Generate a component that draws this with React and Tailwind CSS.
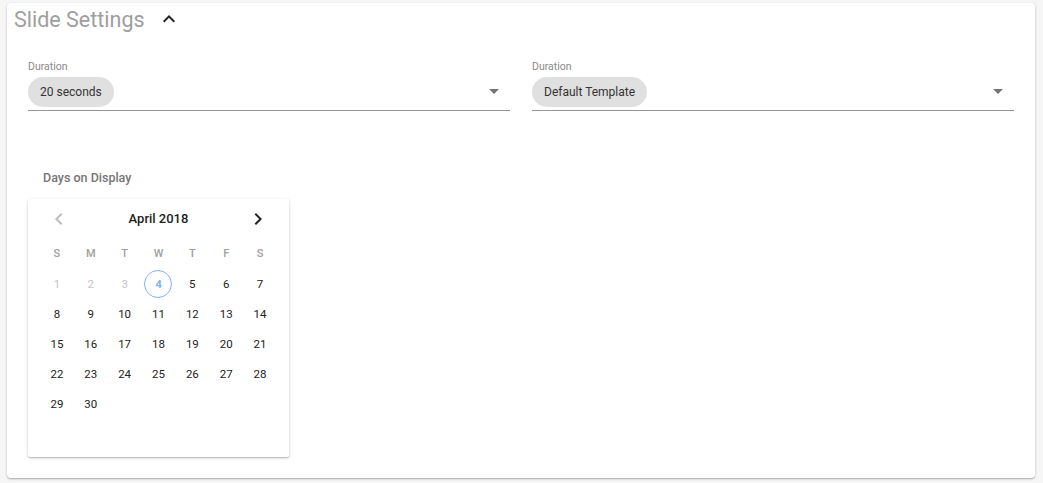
import React from "react";

function Field({ label, value }) {
  return (
    <div className="flex-1 flex flex-col">
      <div className="text-[10.5px] leading-none text-[#8a8a8a] mb-[4px] pt-[1px]">{label}</div>
      <div className="flex items-center justify-between border-b border-[#949494] pb-[3px]">
        <span className="h-[30px] flex items-center rounded-full bg-[#e0e0e0] px-3 text-[12px] text-[#333]">{value}</span>
        <svg width="10" height="5" viewBox="0 0 10 5" className="mr-[11px]">
          <path d="M0 0 L10 0 L5 5 Z" fill="#757575" />
        </svg>
      </div>
    </div>
  );
}

export default function App() {
  const days = [];
  for (let i = 1; i <= 30; i++) days.push(i);
  const heads = ["S", "M", "T", "W", "T", "F", "S"];
  return (
    <div className="w-[1043px] h-[483px] bg-[#f6f6f6] pt-[3px] pl-[7px] pr-[8px]" style={{ fontFamily: "Roboto, 'Noto Sans', sans-serif" }}>
      <div className="h-[475px] bg-white rounded-[4px] shadow-[0_1px_3px_rgba(0,0,0,0.2),0_1px_1px_rgba(0,0,0,0.14)] px-[21px]">
        <div className="flex items-center h-[34px] -ml-[14px]">
          <span className="text-[21.5px] text-[#9e9e9e] leading-none">Slide Settings</span>
          <svg width="12" height="8" viewBox="0 0 12 8" className="ml-[18px] mt-[-2px]">
            <path d="M1.4 7.4 L6 2.8 L10.6 7.4 L12 6 L6 0 L0 6 Z" fill="#222" />
          </svg>
        </div>
        <div className="flex gap-[22px] mt-[24px]">
          <Field label="Duration" value="20 seconds" />
          <Field label="Duration" value="Default Template" />
        </div>
        <div className="mt-[58px] ml-[15px] text-[12.5px] font-medium text-[#757575]">Days on Display</div>
        <div className="mt-[12px] w-[261px] h-[258px] bg-white rounded-[2px] shadow-[0_1px_3px_rgba(0,0,0,0.22),0_1px_1px_rgba(0,0,0,0.12)] px-[12px]">
          <div className="flex items-center justify-between h-[39px] px-[15px]">
            <svg width="8" height="12" viewBox="0 0 8 12">
              <path d="M7.4 1.4 L6 0 L0 6 L6 12 L7.4 10.6 L2.8 6 Z" fill="#bdbdbd" />
            </svg>
            <span className="text-[13px] font-medium text-[#222]">April 2018</span>
            <svg width="8" height="12" viewBox="0 0 8 12">
              <path d="M0.6 1.4 L2 0 L8 6 L2 12 L0.6 10.6 L5.2 6 Z" fill="#222" />
            </svg>
          </div>
          <div className="grid grid-cols-7 mt-[1px]">
            {heads.map((h, i) => (
              <div key={i} className="h-[30px] flex items-center justify-center text-[11px] font-medium text-[#9e9e9e]">{h}</div>
            ))}
            {days.map((d) => (
              <div key={d} className="h-[30px] flex items-center justify-center">
                {d === 4 ? (
                  <span className="w-[28px] h-[28px] rounded-full border border-[#82b1ff] flex items-center justify-center text-[11.5px] font-bold text-[#82b1ff]">4</span>
                ) : (
                  <span className={"text-[11.5px] " + (d < 4 ? "text-[#c4c4c4]" : "text-[#222]")}>{d}</span>
                )}
              </div>
            ))}
          </div>
        </div>
      </div>
    </div>
  );
}
